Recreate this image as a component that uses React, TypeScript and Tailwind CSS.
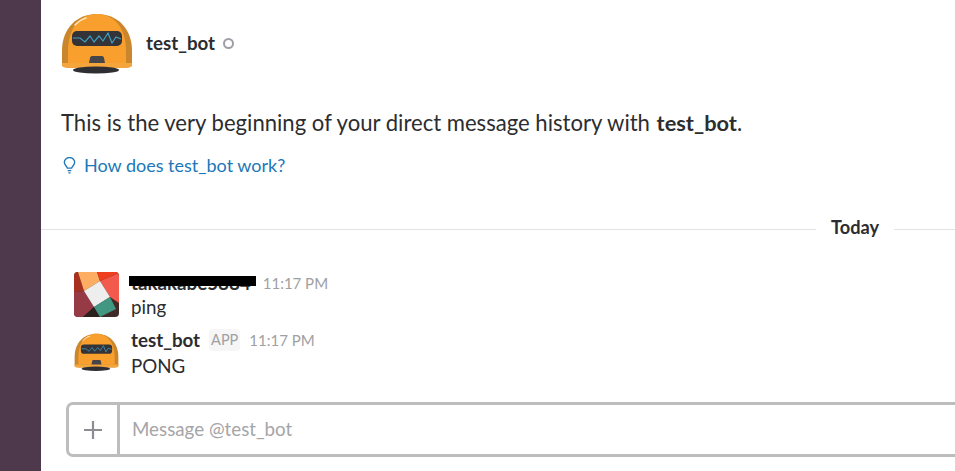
function RobotAvatar({ className }: { className: string }) {
  return (
    <svg viewBox="0 0 72 62" className={className}>
      <path d="M1 52 V38 C1 15 16 1 36 1 C56 1 71 15 71 38 V52 C71 54 68 55 60 55 L12 55 C4 55 1 54 1 52Z" fill="#c9862c" />
      <path d="M7 50 V38 C7 16 18 1 36 1 C54 1 65 16 65 38 V50 Z" fill="#f99f2d" />
      <path d="M1 50 L71 50 L71 52 C71 54 68 55 60 55 L12 55 C4 55 1 54 1 52Z" fill="#f4a63c" />
      <path d="M14 12 C18 8 21 6 25 5" stroke="#ffe4bd" strokeWidth="1.6" fill="none" strokeLinecap="round" />
      <rect x="11" y="18" width="50" height="15" rx="5" fill="#333338" />
      <path d="M12 25 L19 25 L24 29 L29 23 L33 29 L38 23 L42 28 L47 20 L51 30 L55 24 L60 26" stroke="#3f9fc4" strokeWidth="1.2" fill="none" />
      <path d="M28 50 L29 45 C29 44 30 43 31 43 L41 43 C42 43 43 44 43 45 L44 50 Z" fill="#45454a" />
      <ellipse cx="35" cy="57" rx="23" ry="3.6" fill="#2e2e33" />
    </svg>
  );
}

function UserAvatar() {
  return (
    <svg viewBox="0 0 45 45" className="h-[45px] w-[45px] shrink-0 rounded">
      <rect width="45" height="45" fill="#3f2a28" />
      <path d="M0 0H4L10 19L0 20Z" fill="#a8301f" />
      <path d="M4 0H23L26 9L10 19Z" fill="#fdae63" />
      <path d="M23 0H45V1L26 9Z" fill="#ef3f1f" />
      <path d="M26 9L45 1V31L36 25Z" fill="#f15a4d" />
      <path d="M0 20L10 19L20 35L9 45H0Z" fill="#963b45" />
      <path d="M9 45L20 35L26 45Z" fill="#2a201e" />
      <path d="M26 9L36 25L20 35L10 19Z" fill="#eeeeee" />
      <path d="M20 35L36 25L42 37L26 45Z" fill="#429783" />
    </svg>
  );
}

export default function App() {
  return (
    <div className="flex h-[471px] w-[955px] overflow-hidden bg-white font-['Lato','Noto_Sans',sans-serif] text-[#2c2d30]">
      <div className="w-[41px] shrink-0 bg-[#4d394b]" />
      <div className="min-w-0 flex-1">
        <div className="flex pl-[20px] pt-[13px]">
          <RobotAvatar className="h-[62px] w-[72px]" />
          <div className="ml-[13px] mt-[17px] flex h-[26px] items-center">
            <span className="text-[18.75px] font-bold leading-[26px]">test_bot</span>
            <span className="ml-[8px] mt-[1px] h-[11px] w-[11px] rounded-full border-2 border-[#9e9ea6]" />
          </div>
        </div>
        <p className="ml-[20px] mt-[32px] whitespace-nowrap text-[22.1px] leading-[32px]">
          This is the very beginning of your direct message history with <b className="ml-[1px] text-[21.8px] font-bold">test_bot</b>.
        </p>
        <div className="ml-[22px] mt-[13px] flex h-[26px] items-center text-[18px] text-[#2077b8]">
          <svg viewBox="0 0 14 19" className="h-[17px] w-[13px]" fill="none" stroke="#2077b8" strokeWidth="1.5">
            <path d="M4.6 12.5 C4.4 10.5 1.2 9 1.2 5.9 A5.8 5.3 0 0 1 12.8 5.9 C12.8 9 9.6 10.5 9.4 12.5 Z" />
            <path d="M5 15.2 H9 M5.8 17.8 H8.2" />
          </svg>
          <span className="ml-[8px]">How does test_bot work?</span>
        </div>
        <div className="mt-[38px] flex h-[26px] items-center">
          <div className="h-px w-[775px] bg-[#e3e3e5]" />
          <span className="mx-[15px] -mt-[2px] text-[18.2px] font-bold">Today</span>
          <div className="h-px flex-1 bg-[#e3e3e5]" />
        </div>
        <div className="ml-[33px] mt-[30px] flex gap-[12px]">
          <UserAvatar />
          <div className="-mt-[2px]">
            <div className="flex h-[26px] items-center">
              <span className="relative text-[18.75px] font-bold">
                takakabe5884
                <span className="absolute left-[-2px] right-[-5px] top-[7px] h-[10px] bg-black" />
              </span>
              <span className="ml-[12px] text-[15px] text-[#a0a0a2]">11:17 PM</span>
            </div>
            <div className="text-[18.75px] leading-[22px]">ping</div>
          </div>
        </div>
        <div className="ml-[33px] mt-[12px] flex gap-[12px]">
          <RobotAvatar className="mt-[3px] h-[39px] w-[45px] shrink-0" />
          <div className="-mt-[3px]">
            <div className="flex h-[26px] items-center">
              <span className="text-[18.75px] font-bold">test_bot</span>
              <span className="ml-[9px] rounded-sm bg-[#f6f6f7] px-[2px] text-[14.5px] text-[#a0a0a2]">APP</span>
              <span className="ml-[9px] text-[15px] text-[#a0a0a2]">11:17 PM</span>
            </div>
            <div className="text-[18.75px] leading-[26px]">PONG</div>
          </div>
        </div>
        <div className="ml-[25px] mt-[23px] flex h-[55px] w-[1000px] rounded-[7px] border-[3px] border-[#bdbdbd]">
          <div className="flex w-[51px] items-center justify-center border-r-[3px] border-[#bdbdbd]">
            <svg viewBox="0 0 18 18" className="h-[18px] w-[18px]" stroke="#8c8c92" strokeWidth="2.2">
              <path d="M9 0 V18 M0 9 H18" />
            </svg>
          </div>
          <div className="flex items-center pl-[12px] text-[18.75px] text-[#a5a5a8]">Message @test_bot</div>
        </div>
      </div>
    </div>
  );
}
